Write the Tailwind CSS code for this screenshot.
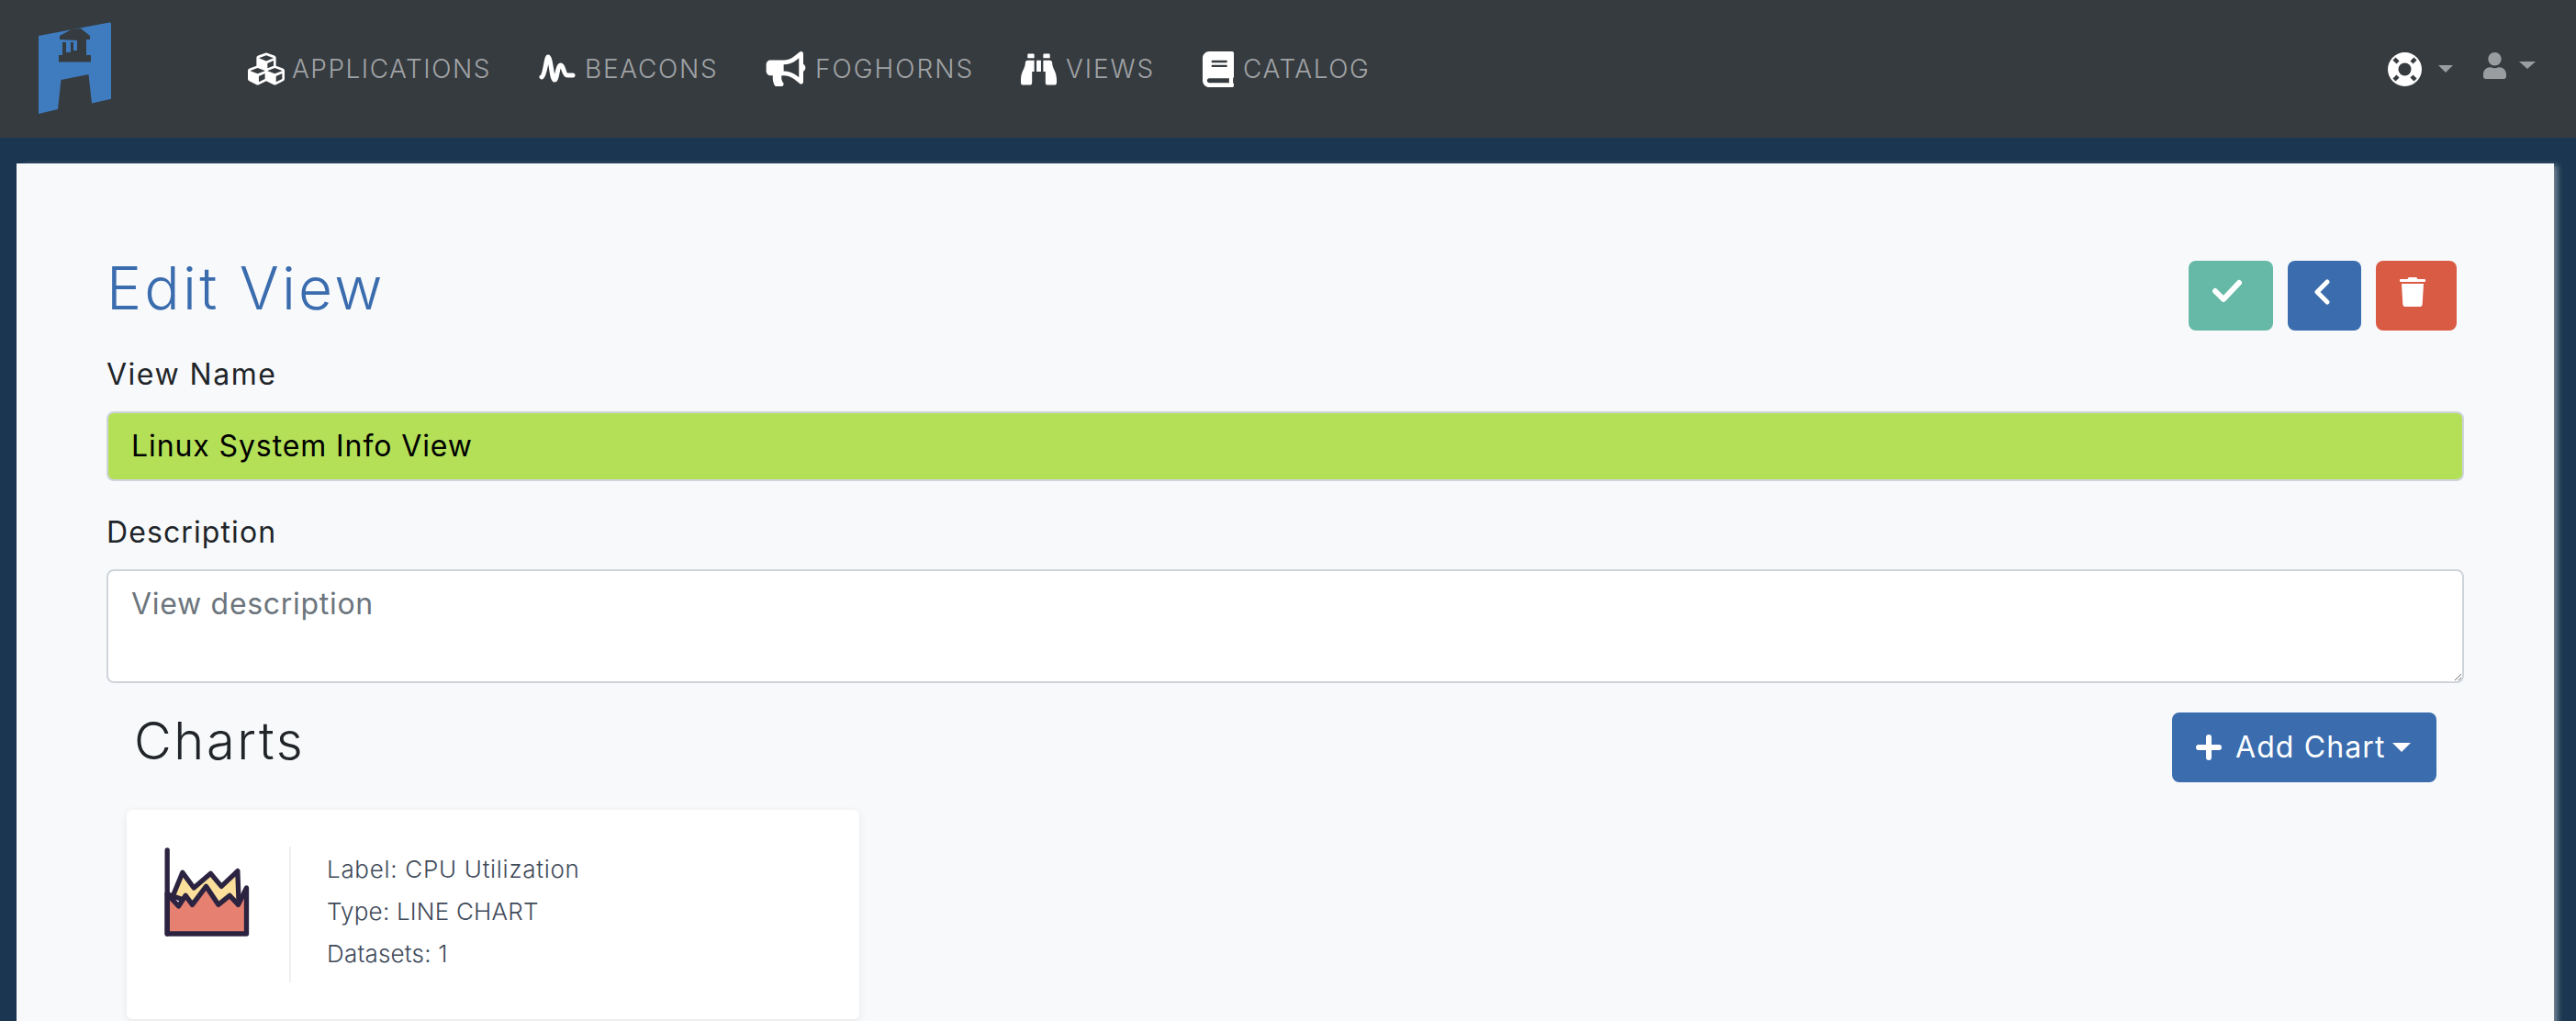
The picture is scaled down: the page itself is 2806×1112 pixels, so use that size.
<!DOCTYPE html>
<html lang="en">
<head>
<meta charset="utf-8">
<title>Edit View</title>
<script src="https://cdn.jsdelivr.net/npm/@tailwindcss/browser@4"></script>
</head>
<body class="bg-[#1a3650] font-['Inter',sans-serif] h-[1112px] overflow-hidden">
<nav class="h-[150px] bg-[#363b3f] flex items-center">
  <svg class="ml-[42px] mt-[-2px] shrink-0" width="80" height="100" viewBox="42 24 80 100">
    <path fill="#3f7cbf" d="M42 39 L119 24.5 Q121 24 121 26 L121 107 Q121 108 120 108 L100 112.5 L96.5 81 L66.5 87 L63 119 L42 124 Z"/>
    <path fill="#363b3f" d="M65 39 L78 32 L88 31 L98 39 L98 43 L94 43 L94 60 L99 60 L99 67.500 L64 67.500 L64 60 L68 60 L68 46 L72 46 L72 57 L77 57 L77 46 L80 46 L80 55 L84 55 L84 44 L65 43 Z"/>
  </svg>
  <div class="flex items-center ml-[148px] text-[28px] font-light text-[#a0a3a6] tracking-[1.5px]">
    <a class="flex items-center w-[317px]">
      <svg class="mr-[8px] shrink-0" width="40" height="40" viewBox="0 0 512 512" fill="#fff"><path d="M488.6 250.2L392 214V105.5c0-15-9.3-28.4-23.4-33.7l-100-37.5c-8.1-3.1-17.1-3.1-25.3 0l-100 37.5c-14.1 5.3-23.4 18.7-23.4 33.7V214l-96.6 36.2C9.3 255.500 0 268.900 0 283.900V394c0 13.600 7.700 26.100 19.900 32.200l100 50c10.100 5.100 22.100 5.100 32.200 0l103.900-52 103.900 52c10.100 5.100 22.100 5.100 32.200 0l100-50c12.200-6.100 19.900-18.600 19.900-32.200V283.900c0-15-9.300-28.400-23.400-33.700zM358 214.800l-85 31.900v-68.200l85-37v73.300zM154 104.100l102-38.200 102 38.200v.6l-102 41.400-102-41.400v-.6zm84 291.100l-85 42.500v-79.100l85-38.800v75.400zm0-112l-102 41.400-102-41.400v-.6l102-38.200 102 38.200v.6zm240 112l-85 42.500v-79.100l85-38.800v75.400zm0-112l-102 41.400-102-41.400v-.6l102-38.200 102 38.200v.6z"/></svg>
      <span class="whitespace-nowrap">APPLICATIONS</span>
    </a>
    <a class="flex items-center w-[247px]">
      <svg class="mr-[10px] shrink-0" width="40" height="34" viewBox="0 0 40 34" fill="none" stroke="#fff" stroke-width="5" stroke-linecap="round" stroke-linejoin="round"><path d="M3 26 C7 24 8 4 10 4 C13 4 14 29 17 29 C20 29 20 13 24 13 C27 13 27 24 31 24 L37 24"/></svg>
      <span class="whitespace-nowrap tracking-[1.7px]">BEACONS</span>
    </a>
    <a class="flex items-center w-[278px]">
      <svg class="mr-[10px] shrink-0" width="44" height="38" viewBox="0 0 576 512" fill="#fff"><path d="M576 240c0-23.630-12.950-44.040-32-55.120V32.010C544 23.260 537.020 0 512 0c-7.120 0-14.190 2.380-19.980 7.020l-85.030 68.030C364.280 109.190 310.220 128 256 128H64c-35.350 0-64 28.650-64 64v96c0 35.350 28.650 64 64 64h33.700c-1.390 10.480-2.180 21.140-2.180 32 0 39.770 9.260 77.350 25.560 110.940 5.190 10.690 16.520 17.060 28.400 17.060h74.280c26.050 0 41.690-29.840 25.900-50.560-16.400-21.520-26.150-48.360-26.150-77.440 0-11.110 1.620-21.790 4.410-32H256c54.220 0 108.280 18.810 150.980 52.950l85.030 68.030a32.023 32.023 0 0 0 19.980 7.020c24.920 0 32-22.780 32-32V295.130C563.050 284.040 576 263.630 576 240zm-96 141.420l-33.050-26.440C392.950 311.780 325.120 288 256 288v-96c69.120 0 136.950-23.780 190.950-66.980L480 98.580v282.840z"/></svg>
      <span class="whitespace-nowrap tracking-[2px]">FOGHORNS</span>
    </a>
    <a class="flex items-center w-[198px]">
      <svg class="mr-[10px] shrink-0" width="39" height="39" viewBox="0 0 512 512" fill="#fff"><path d="M416 48c0-8.840-7.160-16-16-16h-64c-8.840 0-16 7.160-16 16v48h96V48zM63.910 159.990C61.400 253.840 3.460 274.220 0 404v44c0 17.670 14.330 32 32 32h96c17.670 0 32-14.330 32-32V288h32V128H95.840c-17.630 0-31.450 14.370-31.930 31.990zm384.180 0c-.48-17.620-14.300-31.990-31.930-31.990H320v160h32v160c0 17.670 14.330 32 32 32h96c17.670 0 32-14.330 32-32v-44c-3.460-129.780-61.400-150.160-63.910-244.010zM176 32h-64c-8.840 0-16 7.160-16 16v48h96V48c0-8.840-7.160-16-16-16zm48 256h64V128h-64v160z"/></svg>
      <span class="whitespace-nowrap tracking-[1.9px]">VIEWS</span>
    </a>
    <a class="flex items-center">
      <svg class="mr-[10px] shrink-0" width="34" height="39" viewBox="0 0 448 512" fill="#fff" preserveAspectRatio="none"><path d="M448 360V24c0-13.300-10.700-24-24-24H96C43 0 0 43 0 96v320c0 53 43 96 96 96h328c13.300 0 24-10.700 24-24v-16c0-7.500-3.500-14.300-8.900-18.700-4.200-15.400-4.200-59.300 0-74.700 5.400-4.300 8.900-11.100 8.900-18.600zM128 134c0-3.300 2.700-6 6-6h212c3.300 0 6 2.700 6 6v20c0 3.300-2.700 6-6 6H134c-3.300 0-6-2.700-6-6v-20zm0 64c0-3.300 2.700-6 6-6h212c3.300 0 6 2.700 6 6v20c0 3.300-2.700 6-6 6H134c-3.300 0-6-2.700-6-6v-20zm253.400 250H96c-17.700 0-32-14.300-32-32 0-17.600 14.400-32 32-32h285.400c-1.900 17.100-1.900 46.900 0 64z"/></svg>
      <span class="whitespace-nowrap">CATALOG</span>
    </a>
  </div>
  <div class="ml-auto mr-[44px] flex items-center">
    <svg class="shrink-0" width="37" height="37" viewBox="0 0 37 37"><circle cx="18.500" cy="18.500" r="18.500" fill="#fff"/><circle cx="18.500" cy="18.500" r="7" fill="#363b3f"/><g stroke="#363b3f" stroke-width="4.500"><path d="M7 7 L11 11"/><path d="M30 7 L26 11"/><path d="M7 30 L11 26"/><path d="M30 30 L26 26"/></g></svg>
    <span class="ml-[18px] mr-[33px] w-0 h-0 border-x-[8px] border-x-transparent border-t-[8px] border-t-[#9a9da0]"></span>
    <svg class="shrink-0 mt-[-8px]" width="25" height="29" viewBox="0 0 448 512" fill="#9a9da0" preserveAspectRatio="none"><path d="M224 256c70.700 0 128-57.300 128-128S294.700 0 224 0 96 57.300 96 128s57.300 128 128 128zm89.600 32h-16.700c-22.200 10.200-46.900 16-72.900 16s-50.600-5.800-72.900-16h-16.700C60.200 288 0 348.200 0 422.400V464c0 26.500 21.500 48 48 48h352c26.500 0 48-21.500 48-48v-41.600c0-74.200-60.200-134.400-134.400-134.400z"/></svg>
    <span class="ml-[14px] mt-[-8px] w-0 h-0 border-x-[9px] border-x-transparent border-t-[8px] border-t-[#9a9da0]"></span>
  </div>
</nav>
<main class="mt-[28px] ml-[18px] w-[2764px] h-[1000px] bg-[#f8f9fb] px-[98px] pt-[104px] shadow-[6px_0_6px_-2px_rgba(255,255,255,0.4)]">
  <div class="flex justify-between items-start h-[106px]">
    <h1 class="text-[64px] leading-[64px] text-[#3a6cae] font-light tracking-[3.2px]">Edit View</h1>
    <div class="flex gap-[16px] mr-[8px] mt-[2px]">
      <button class="w-[92px] h-[76px] rounded-[8px] bg-[#66b9a6] flex items-center justify-center pb-[10px] pr-[8px]">
        <svg width="34" height="26" viewBox="0 0 34 26" fill="none" stroke="#fff" stroke-width="6" stroke-linecap="round" stroke-linejoin="round"><path d="M4 13 L13 22 L30 4"/></svg>
      </button>
      <button class="w-[80px] h-[76px] rounded-[8px] bg-[#3a6cae] flex items-center justify-center pb-[8px] pr-[6px]">
        <svg width="18" height="28" viewBox="0 0 18 28" fill="none" stroke="#fff" stroke-width="5" stroke-linecap="round" stroke-linejoin="round"><path d="M15 3 L4 14 L15 25"/></svg>
      </button>
      <button class="w-[88px] h-[76px] rounded-[8px] bg-[#da5b43] flex items-center justify-center pb-[8px] pr-[8px]">
        <svg width="28" height="32" viewBox="0 0 448 512" fill="#fff"><path d="M432 32H312l-9.400-18.700A24 24 0 0 0 281.100 0H166.800a23.720 23.720 0 0 0-21.400 13.300L136 32H16A16 16 0 0 0 0 48v16a16 16 0 0 0 16 16h416a16 16 0 0 0 16-16V48a16 16 0 0 0-16-16zM53.200 467a48 48 0 0 0 47.900 45h245.800a48 48 0 0 0 47.900-45L416 112H32z"/></svg>
      </button>
    </div>
  </div>
  <label class="block pt-[2px] text-[32px] leading-[36px] text-[#212529] tracking-[1.5px] mb-[22px]">View Name</label>
  <input class="block w-full h-[76px] rounded-[8px] border-2 border-[#ced4da] bg-[#b4e058] pl-[25px] pr-[26px] pb-[2px] text-[32px] text-black tracking-[0.9px]" value="Linux System Info View">
  <label class="block mt-[36px] pt-[2px] text-[32px] leading-[36px] text-[#212529] tracking-[1.1px] mb-[22px]">Description</label>
  <textarea class="block w-full h-[124px] rounded-[8px] border-2 border-[#ced4da] bg-white pl-[25px] pr-[26px] py-[12px] text-[32px] tracking-[0.7px] placeholder:text-[#6c757d]" placeholder="View description"></textarea>
  <div class="flex justify-between items-center mt-[32px] pl-[30px] pr-[30px] h-[76px]">
    <h2 class="text-[56px] leading-[64px] text-[#212529] font-light tracking-[2.6px] mt-[-14px]">Charts</h2>
    <button class="w-[288px] h-[76px] rounded-[8px] bg-[#3a6cae] text-white text-[32px] flex items-center pl-[26px]">
      <svg class="mr-[15px]" width="28" height="28" viewBox="0 0 28 28" fill="none" stroke="#fff" stroke-width="6" stroke-linecap="round"><path d="M14 3 V25 M3 14 H25"/></svg>
      <span class="tracking-[1.1px] whitespace-nowrap">Add Chart</span>
      <span class="ml-[8px] w-0 h-0 border-x-[10px] border-x-transparent border-t-[10px] border-t-white"></span>
    </button>
  </div>
  <div class="mt-[30px] ml-[22px] w-[798px] h-[228px] bg-white rounded-[6px] shadow-[0_2px_8px_rgba(0,0,0,0.08)] flex pt-[40px]">
    <svg class="ml-[40px] shrink-0" width="95" height="100" viewBox="56 60 284 300">
      <path d="M68 215 L85 225 L118 145 L155 195 L210 148 L245 190 L298 140 L302 250 L195 260 Z" fill="#fbdf9b" stroke="#2b2340" stroke-width="16" stroke-linejoin="round"/>
      <path d="M68 215 L105 255 L128 220 L150 250 L195 190 L235 250 L272 220 L300 250 L327 195 L327 345 L68 345 Z" fill="#e68070" stroke="#2b2340" stroke-width="16" stroke-linejoin="round"/>
      <path d="M68 72 L68 345" fill="none" stroke="#2b2340" stroke-width="16" stroke-linecap="round"/>
    </svg>
    <div class="ml-[42px] w-[2px] h-[148px] bg-[#eef0f2]"></div>
    <div class="ml-[39px] pt-[2px] text-[26px] leading-[46px] text-[#3f4a5a] font-light">
      <p class="tracking-[0.7px]">Label: CPU Utilization</p>
      <p class="tracking-[0.2px]">Type: LINE CHART</p>
      <p class="tracking-[0.2px]">Datasets: 1</p>
    </div>
  </div>
</main>
</body>
</html>
